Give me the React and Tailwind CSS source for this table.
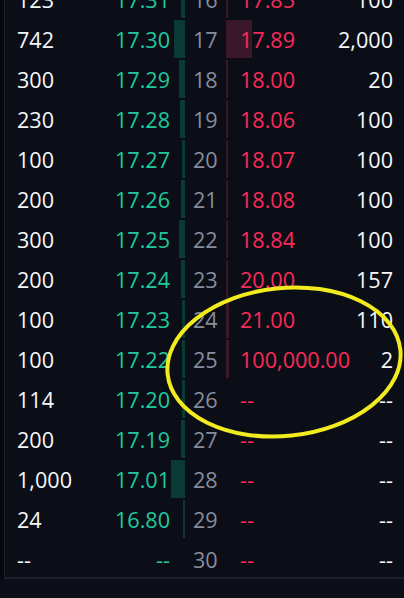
import React from "react";

const rows = [
    { lvl: 16, bq: "123", bp: "17.31", bb: 4, ap: "17.85", aq: "100", ab: 2 },
    { lvl: 17, bq: "742", bp: "17.30", bb: 11, ap: "17.89", aq: "2,000", ab: 26 },
    { lvl: 18, bq: "300", bp: "17.29", bb: 6, ap: "18.00", aq: "20", ab: 2 },
    { lvl: 19, bq: "230", bp: "17.28", bb: 5, ap: "18.06", aq: "100", ab: 2 },
    { lvl: 20, bq: "100", bp: "17.27", bb: 3, ap: "18.07", aq: "100", ab: 2 },
    { lvl: 21, bq: "200", bp: "17.26", bb: 4, ap: "18.08", aq: "100", ab: 2 },
    { lvl: 22, bq: "300", bp: "17.25", bb: 6, ap: "18.84", aq: "100", ab: 2 },
    { lvl: 23, bq: "200", bp: "17.24", bb: 4, ap: "20.00", aq: "157", ab: 2 },
    { lvl: 24, bq: "100", bp: "17.23", bb: 3, ap: "21.00", aq: "110", ab: 3 },
    { lvl: 25, bq: "100", bp: "17.22", bb: 3, ap: "100,000.00", aq: "2", ab: 3 },
    { lvl: 26, bq: "114", bp: "17.20", bb: 3, ap: "--", aq: "--", ab: 0 },
    { lvl: 27, bq: "200", bp: "17.19", bb: 4, ap: "--", aq: "--", ab: 0 },
    { lvl: 28, bq: "1,000", bp: "17.01", bb: 14, ap: "--", aq: "--", ab: 0 },
    { lvl: 29, bq: "24", bp: "16.80", bb: 2, ap: "--", aq: "--", ab: 0 },
    { lvl: 30, bq: "--", bp: "--", bb: 0, ap: "--", aq: "--", ab: 0 },
];

const Row = ({ r }) => (
    <div className="flex h-[40px] items-start leading-[40px]">
        <div className="w-[95px] pl-[12px] text-[#f6f7f9]">{r.bq}</div>
        <div className="w-[70px] text-right text-[#1fc99c]">{r.bp}</div>
        <div className="w-[15px] flex justify-end">
            {r.bb > 0 && <div className="h-[38px] bg-[#093a33]" style={{ width: r.bb }} />}
        </div>
        <div className="w-[41px] pl-[8px] text-[#878c9e]">{r.lvl}</div>
        <div className="flex-1 relative pl-[14px] text-[#fc2a58]">
            {r.ab > 0 && <div className="absolute left-0 top-0 h-[38px] bg-[#3a1829]" style={{ width: r.ab }} />}
            <span className="relative">{r.ap}</span>
        </div>
        <div className="pr-[11px] text-right text-[#f6f7f9]">{r.aq}</div>
    </div>
);

export default function App() {
    return (
        <div className="relative w-[404px] h-[598px] overflow-hidden bg-[#0b0e17] text-[21.6px]" style={{ fontFamily: '"Open Sans", "DejaVu Sans", sans-serif' }}>
            <div className="flex bg-[#06080d] pl-[4px]">
                <div className="flex-1 h-[579px] border-l border-b-2 border-[#1b202d] bg-[#0b0e17] overflow-hidden">
                    <div className="-mt-[20px]">
                        {rows.map((r) => <Row key={r.lvl} r={r} />)}
                    </div>
                </div>
            </div>
            <svg className="absolute inset-0 pointer-events-none" width="404" height="598">
                <ellipse cx="284" cy="362" rx="117" ry="74" transform="rotate(-6 284 362)" fill="none" stroke="#f1eb1f" strokeWidth="4" />
            </svg>
        </div>
    );
}
